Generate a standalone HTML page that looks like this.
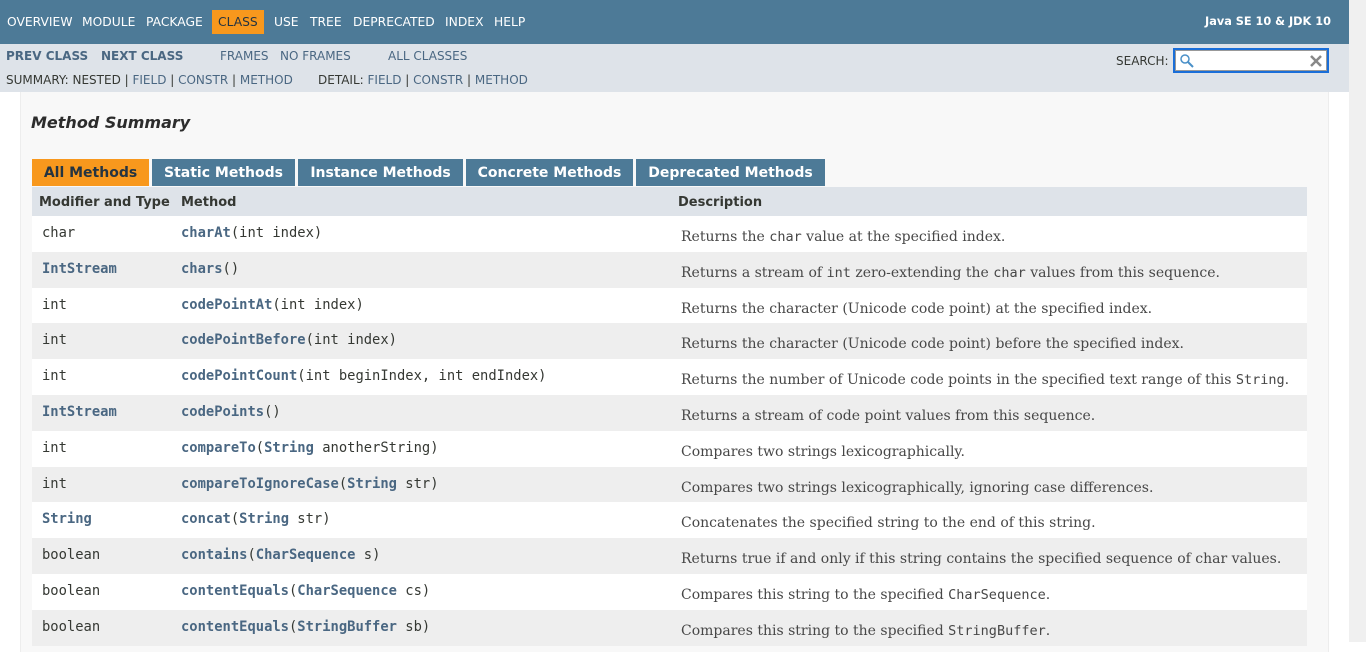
<!DOCTYPE html><html><head><style>
body{margin:0;width:1366px;height:642px;overflow:hidden;background:#fff;font-family:"DejaVu Sans","Liberation Sans",sans-serif;position:relative}
.top{position:absolute;left:0;top:0;width:1349px;height:44px;background:#4d7a97;color:#fff;font-size:12.3px}
.top span{position:absolute;top:15px}
.cls{background:#f8981d;color:#253441;padding:5px 6px;top:10px!important}
.sub{position:absolute;left:0;top:44px;width:1349px;height:48px;background:#dee3e9;font-size:12px;color:#4a6782}
.sub span{position:absolute}
.sb{position:absolute;left:1349px;top:0;width:17px;height:642px;background:#f0f0f0}
.box{position:absolute;left:20px;top:92px;width:1307px;height:560px;background:#f8f8f8;border-left:1px solid #ededed;border-right:1px solid #ededed}
h3{position:absolute;left:31px;top:113px;margin:0;font-size:16px;font-style:italic;font-weight:bold;color:#2c2c2c}
.tab{position:absolute;top:159px;height:27px;line-height:28px;background:#4d7a97;color:#fff;font-weight:bold;font-size:14px;text-align:center}
.tbl{position:absolute;left:32px;top:187px;width:1275px}
.hd{height:29px;background:#dee3e9;font-weight:bold;font-size:13px;color:#353833;position:relative}
.hd span{position:absolute;top:8px}
.r{height:35.8px;position:relative;background:#fff;color:#353833}
.r:nth-child(even){background:#eee}
.r span{position:absolute;white-space:nowrap}
.t{left:10px;top:9px;font:13.8px "DejaVu Sans Mono",monospace}
.m{left:149px;top:9px;font:13.8px "DejaVu Sans Mono",monospace}
.d{left:649px;top:13px;font:14px "DejaVu Serif","Liberation Serif",serif;color:#474747}
b{color:#4a6782}
code{font:13.5px "DejaVu Sans Mono",monospace}
</style></head><body>
<div class="top">
<span style="left:7px">OVERVIEW</span><span style="left:82px">MODULE</span><span style="left:146px">PACKAGE</span><span class="cls" style="left:212px">CLASS</span><span style="left:274px">USE</span><span style="left:310px">TREE</span><span style="left:353px">DEPRECATED</span><span style="left:445px">INDEX</span><span style="left:494px">HELP</span>
<span style="left:1205px;font-weight:bold;font-size:11.3px">Java SE 10 &amp; JDK 10</span>
</div>
<div class="sub">
<span style="left:6px;top:5px;font-weight:bold">PREV CLASS</span><span style="left:101px;top:5px;font-weight:bold">NEXT CLASS</span>
<span style="left:220px;top:5px">FRAMES</span><span style="left:280px;top:5px">NO FRAMES</span><span style="left:388px;top:5px">ALL CLASSES</span>
<span style="left:6px;top:29px;color:#353833">SUMMARY: NESTED | <a style="color:#4a6782">FIELD</a> | <a style="color:#4a6782">CONSTR</a> | <a style="color:#4a6782">METHOD</a></span>
<span style="left:318px;top:29px;color:#353833">DETAIL: <a style="color:#4a6782">FIELD</a> | <a style="color:#4a6782">CONSTR</a> | <a style="color:#4a6782">METHOD</a></span>
<span style="left:1116px;top:10px;color:#353833">SEARCH:</span>
<div style="position:absolute;left:1173px;top:4px;width:152px;height:21px;background:#fff;border:2px solid #1a6ed8;box-shadow:inset 0 0 0 1px #999">
<svg width="16" height="16" style="position:absolute;left:4px;top:3px"><circle cx="6" cy="6" r="4" fill="none" stroke="#4a90c8" stroke-width="1.5"/><line x1="9" y1="9" x2="14" y2="14" stroke="#4a90c8" stroke-width="2"/></svg>
<svg width="14" height="14" style="position:absolute;right:4px;top:4px"><path d="M2 2L12 12M12 2L2 12" stroke="#888" stroke-width="2.5"/></svg>
</div>
</div>
<div class="sb"></div>
<div class="box"></div>
<h3>Method Summary</h3>
<div class="tab" style="left:32px;width:117px;background:#f8981d;color:#253441">All Methods</div>
<div class="tab" style="left:152px;width:143px">Static Methods</div>
<div class="tab" style="left:298px;width:165px">Instance Methods</div>
<div class="tab" style="left:466px;width:167px">Concrete Methods</div>
<div class="tab" style="left:636px;width:189px">Deprecated Methods</div>
<div class="tbl">
<div class="hd"><span style="left:7px">Modifier and Type</span><span style="left:149px">Method</span><span style="left:646px">Description</span></div>
<div>
<div class="r"><span class="t">char</span><span class="m"><b>charAt</b>(int index)</span><span class="d">Returns the <code>char</code> value at the specified index.</span></div>
<div class="r"><span class="t"><b>IntStream</b></span><span class="m"><b>chars</b>()</span><span class="d">Returns a stream of <code>int</code> zero-extending the <code>char</code> values from this sequence.</span></div>
<div class="r"><span class="t">int</span><span class="m"><b>codePointAt</b>(int index)</span><span class="d">Returns the character (Unicode code point) at the specified index.</span></div>
<div class="r"><span class="t">int</span><span class="m"><b>codePointBefore</b>(int index)</span><span class="d">Returns the character (Unicode code point) before the specified index.</span></div>
<div class="r"><span class="t">int</span><span class="m"><b>codePointCount</b>(int beginIndex, int endIndex)</span><span class="d">Returns the number of Unicode code points in the specified text range of this <code>String</code>.</span></div>
<div class="r"><span class="t"><b>IntStream</b></span><span class="m"><b>codePoints</b>()</span><span class="d">Returns a stream of code point values from this sequence.</span></div>
<div class="r"><span class="t">int</span><span class="m"><b>compareTo</b>(<b>String</b> anotherString)</span><span class="d">Compares two strings lexicographically.</span></div>
<div class="r"><span class="t">int</span><span class="m"><b>compareToIgnoreCase</b>(<b>String</b> str)</span><span class="d">Compares two strings lexicographically, ignoring case differences.</span></div>
<div class="r"><span class="t"><b>String</b></span><span class="m"><b>concat</b>(<b>String</b> str)</span><span class="d">Concatenates the specified string to the end of this string.</span></div>
<div class="r"><span class="t">boolean</span><span class="m"><b>contains</b>(<b>CharSequence</b> s)</span><span class="d">Returns true if and only if this string contains the specified sequence of char values.</span></div>
<div class="r"><span class="t">boolean</span><span class="m"><b>contentEquals</b>(<b>CharSequence</b> cs)</span><span class="d">Compares this string to the specified <code>CharSequence</code>.</span></div>
<div class="r"><span class="t">boolean</span><span class="m"><b>contentEquals</b>(<b>StringBuffer</b> sb)</span><span class="d">Compares this string to the specified <code>StringBuffer</code>.</span></div>
</div></div>
</body></html>
